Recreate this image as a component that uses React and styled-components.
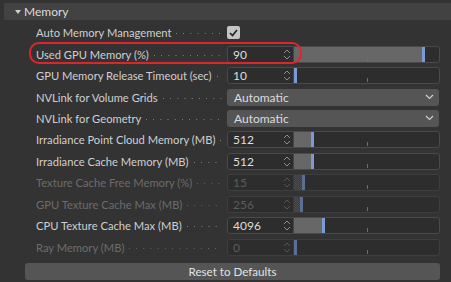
import React from 'react';
import styled, { createGlobalStyle } from 'styled-components';

const Global = createGlobalStyle`
	html, body {
		margin: 0;
		background: #333333;
	}
	body {
		font-family: Lato, 'Liberation Sans', sans-serif;
		font-size: 11.2px;
		color: #d6d6d6;
	}
`;

const Panel = styled.div`
	position: relative;
	width: 451px;
	height: 282px;
	padding-top: 3px;
	box-sizing: border-box;
`;

const Header = styled.div`
	margin-left: 4px;
	height: 17px;
	background: #424242;
	display: flex;
	align-items: center;
	padding-left: 11px;
	gap: 3px;
	color: #dcdcdc;
	font-size: 12px;
`;

const Caret = styled.span`
	width: 0;
	height: 0;
	border-left: 3.5px solid transparent;
	border-right: 3.5px solid transparent;
	border-top: 4px solid #d0d0d0;
	margin-top: 1px;
`;

const Rows = styled.div`
	padding-top: 2px;
	padding-left: 36px;
`;

const Row = styled.div`
	display: grid;
	grid-template-columns: 191px 213px;
	height: 21.45px;
	align-items: center;
`;

const Label = styled.div`
	display: flex;
	align-items: center;
	white-space: nowrap;
	overflow: hidden;
	color: ${p => (p.$off ? '#6c6c6c' : '#cfcfcf')};
`;

const Leader = styled.span`
	flex: 1;
	align-self: stretch;
	margin: 0 5px 0 5px;
	background-image: linear-gradient(to right, #8a8a8a 1px, transparent 1px);
	background-size: 7.2px 1px;
	background-repeat: repeat-x;
	background-position: left bottom 5px;
	opacity: ${p => (p.$off ? 0.6 : 1)};
`;

const Check = styled.div`
	width: 13px;
	height: 13px;
	border-radius: 2px;
	background: #c4c4c4;
	display: flex;
	align-items: center;
	justify-content: center;
`;

const Field = styled.div`
	display: grid;
	grid-template-columns: 66px 1fr;
	height: 17px;
	box-sizing: border-box;
	border: 1px solid ${p => (p.$off ? '#3e3e3e' : '#4a4a4a')};
	border-radius: 3px;
	background: #2d2d2d;
	overflow: hidden;
`;

const Value = styled.div`
	display: flex;
	align-items: center;
	justify-content: space-between;
	padding: 0 2px 0 5px;
	font-size: 12px;
	color: ${p => (p.$off ? '#5c5c5c' : '#dedede')};
	border-right: 1px solid ${p => (p.$off ? '#3a3a3a' : '#444')};
`;

const Track = styled.div`
	position: relative;
	display: flex;
	align-items: stretch;
`;

const Fill = styled.div`
	background: ${p =>
		p.$off
			? 'repeating-conic-gradient(#4e4e4e 0 25%, #3a3a3a 0 50%) 0 0 / 2px 2px'
			: '#676767'};
`;

const Marker = styled.div`
	width: 3px;
	background: ${p => (p.$off ? '#5b6f96' : '#7b9bd2')};
`;

const Tick = styled.div`
	position: absolute;
	left: 73px;
	bottom: 1px;
	width: 1px;
	height: 4px;
	background: #5f6f8c;
`;

const Select = styled.div`
	height: 17px;
	margin-right: 1px;
	border-radius: 3px;
	background: #555555;
	display: flex;
	align-items: center;
	justify-content: space-between;
	padding: 0 5px 0 7px;
	color: #dcdcdc;
	font-size: 12px;
`;

const ResetButton = styled.div`
	margin: 5px 11px 0 25px;
	height: 17px;
	border-radius: 3px;
	background: #555555;
	display: flex;
	align-items: center;
	justify-content: center;
	color: #e2e2e2;
	font-size: 11.6px;
`;

const Highlight = styled.div`
	position: absolute;
	left: 29px;
	top: 42px;
	width: 273px;
	height: 22px;
	box-sizing: border-box;
	border: 2.5px solid #e1242b;
	border-radius: 10px;
	pointer-events: none;
`;

const Spinner = ({ off }) => (
	<svg width="8" height="13" viewBox="0 0 8 13">
		<path d="M1 5 L4 2 L7 5 M1 8 L4 11 L7 8" fill="none" stroke={off ? '#555' : '#8c8c8c'} strokeWidth="1" />
	</svg>
);

const Chevron = () => (
	<svg width="9" height="6" viewBox="0 0 9 6">
		<path d="M1 1 L4.5 4.5 L8 1" fill="none" stroke="#d0d0d0" strokeWidth="1.2" />
	</svg>
);

const NumberSlider = ({ value, fill, off }) => (
	<Field $off={off}>
		<Value $off={off}>
			{value}
			<Spinner off={off} />
		</Value>
		<Track>
			<Fill $off={off} style={{ width: fill }} />
			<Marker $off={off} />
			<Tick />
		</Track>
	</Field>
);

const rows = [
	{ label: 'Auto Memory Management', kind: 'check' },
	{ label: 'Used GPU Memory (%)', value: '90', fill: 128 },
	{ label: 'GPU Memory Release Timeout (sec)', value: '10', fill: 0 },
	{ label: 'NVLink for Volume Grids', kind: 'select' },
	{ label: 'NVLink for Geometry', kind: 'select' },
	{ label: 'Irradiance Point Cloud Memory (MB)', value: '512', fill: 17 },
	{ label: 'Irradiance Cache Memory (MB)', value: '512', fill: 17 },
	{ label: 'Texture Cache Free Memory (%)', value: '15', fill: 8, off: true },
	{ label: 'GPU Texture Cache Max (MB)', value: '256', fill: 6, off: true },
	{ label: 'CPU Texture Cache Max (MB)', value: '4096', fill: 28 },
	{ label: 'Ray Memory (MB)', value: '0', fill: 0, off: true }
];

const App = () => (
	<Panel>
		<Global />
		<Header>
			<Caret />
			Memory
		</Header>
		<Rows>
			{rows.map(r => (
				<Row key={r.label}>
					<Label $off={r.off}>
						{r.label}
						<Leader $off={r.off} />
					</Label>
					{r.kind === 'check' && (
						<Check>
							<svg width="9" height="8" viewBox="0 0 9 8">
								<path d="M1 4 L3.5 6.5 L8 1" fill="none" stroke="#1e1e1e" strokeWidth="1.6" />
							</svg>
						</Check>
					)}
					{r.kind === 'select' && (
						<Select>
							Automatic
							<Chevron />
						</Select>
					)}
					{!r.kind && <NumberSlider value={r.value} fill={r.fill} off={r.off} />}
				</Row>
			))}
		</Rows>
		<ResetButton>Reset to Defaults</ResetButton>
		<Highlight />
	</Panel>
);

export default App;
